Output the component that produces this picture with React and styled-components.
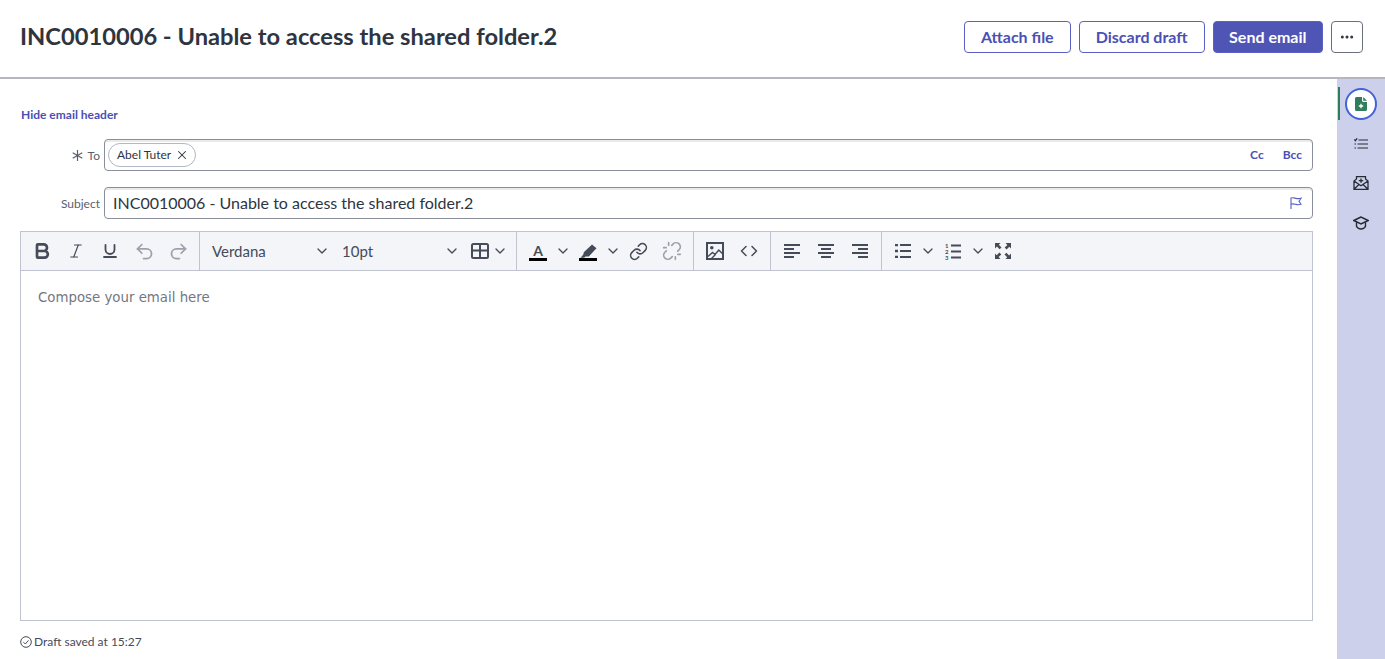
import styled, { createGlobalStyle } from "styled-components";
import {
  Bold,
  ChevronDown,
  Code,
  Italic,
  Link,
  MoreHorizontal,
  Redo2,
  Underline,
  Undo2,
  Unlink,
  X,
} from "lucide-react";

const GlobalStyle = createGlobalStyle`
  html, body { margin: 0; height: 100%; background: #fff; }
  body { font-family: Lato, "Liberation Sans", sans-serif; color: #2e3440; overflow: hidden; }
  * { box-sizing: border-box; }
`;

const Page = styled.div`
  width: 1385px;
  height: 659px;
  display: flex;
  flex-direction: column;
`;
const Header = styled.header`
  height: 79px;
  flex: none;
  display: flex;
  align-items: flex-start;
  justify-content: space-between;
  padding: 21px 22px 0 20px;
  border-bottom: 2px solid #b4b7c0;
`;
const Title = styled.h1`
  margin: 0;
  font-size: 23.7px;
  line-height: 30px;
  font-weight: 700;
  color: #2e3440;
`;
const Actions = styled.div`
  display: flex;
  gap: 8px;
`;
const Button = styled.button`
  height: 32px;
  padding: 0 ${(p) => (p.$primary ? 15.5 : 16)}px 2px;
  border-radius: 4px;
  font: 700 16px Lato, sans-serif;
  border: 1px solid #5a60c4;
  background: ${(p) => (p.$primary ? "#4f55b5" : "#fff")};
  color: ${(p) => (p.$primary ? "#fff" : "#4a50b4")};
`;
const MoreButton = styled.button`
  width: 32px;
  height: 32px;
  padding: 0;
  display: grid;
  place-items: center;
  border-radius: 4px;
  border: 1px solid #6b6f7a;
  background: #fff;
  color: #2e3440;
`;
const Body = styled.div`
  flex: 1;
  display: flex;
  min-height: 0;
`;
const Main = styled.main`
  flex: 1;
  min-width: 0;
  padding: 28px 24px 0 20px;
`;
const HideLink = styled.a`
  display: block;
  height: 16px;
  margin-left: 1px;
  font-size: 12px;
  line-height: 16px;
  font-weight: 700;
  color: #4a50b4;
`;
const FieldRow = styled.div`
  display: flex;
  align-items: center;
  gap: 4px;
  margin-top: ${(p) => p.$top}px;
`;
const FieldLabel = styled.label`
  width: 80px;
  flex: none;
  display: flex;
  justify-content: flex-end;
  align-items: center;
  gap: 5px;
  font-size: 12px;
  color: #5b606c;
`;
const FieldBox = styled.div`
  flex: 1;
  height: 32px;
  display: flex;
  align-items: center;
  padding: 0 10px 0 3px;
  border: 1px solid #8a8e9b;
  border-radius: 4px;
  background: #fff;
  box-shadow: inset 0 2px 0 #e9eaee;
`;
const Chip = styled.span`
  height: 24px;
  display: inline-flex;
  align-items: center;
  gap: 4px;
  padding: 0 6px 1px 8px;
  border: 1px solid #b4b7c4;
  border-radius: 12px;
  font-size: 12px;
  color: #2e3440;
`;
const Spacer = styled.div`
  flex: 1;
`;
const CopyLink = styled.a`
  margin-left: 19px;
  padding-bottom: 2px;
  font-size: 12px;
  font-weight: 700;
  color: #4a50b4;
`;
const SubjectText = styled.span`
  flex: 1;
  padding: 0 0 2px 5px;
  font-size: 16px;
  color: #2e3440;
`;
const Editor = styled.div`
  height: 390px;
  margin-top: 12px;
  border: 1px solid #c0c3d0;
  display: flex;
  flex-direction: column;
`;
const Toolbar = styled.div`
  height: 39px;
  flex: none;
  display: flex;
  background: #f4f5f8;
  border-bottom: 1px solid #c0c3d0;
  color: #454b58;
`;
const ToolGroup = styled.div`
  display: flex;
  align-items: center;
  padding: 0 ${(p) => p.$right || 4}px 0 4px;
  border-right: ${(p) => (p.$last ? "none" : "1px solid #c0c3d0")};
`;
const Tool = styled.span`
  width: ${(p) => p.$w || 34}px;
  height: 34px;
  flex: none;
  display: flex;
  align-items: center;
  justify-content: center;
  color: ${(p) => (p.$muted ? "#9da1ab" : "inherit")};
`;
const Select = styled.span`
  width: ${(p) => p.$w}px;
  flex: none;
  display: flex;
  align-items: center;
  justify-content: space-between;
  padding: 0 ${(p) => p.$right}px 0 ${(p) => p.$left}px;
  font-size: 15px;
  color: #454b58;
`;
const ColorTool = styled.span`
  width: 18px;
  height: 19px;
  display: flex;
  flex-direction: column;
  align-items: center;
  justify-content: flex-end;
  border-bottom: 3px solid #000;
`;
const ColorLetter = styled.span`
  font-size: 14px;
  line-height: 15px;
  font-weight: 700;
  color: #454b58;
`;
const Compose = styled.div`
  flex: 1;
  padding: 18px 17px;
  font-family: "DejaVu Sans", Verdana, sans-serif;
  font-size: 13.33px;
  line-height: 18px;
  color: #73777f;
  background: #fff;
`;
const Status = styled.div`
  display: flex;
  align-items: center;
  gap: 2px;
  margin-top: 13px;
  font-size: 12px;
  line-height: 16px;
  color: #454b58;
`;
const Rail = styled.aside`
  width: 48px;
  flex: none;
  display: flex;
  flex-direction: column;
  align-items: center;
  padding-top: 4px;
  background: #ccd0ea;
  color: #262b36;
`;
const RailItem = styled.div`
  position: relative;
  width: 48px;
  height: 40px;
  display: grid;
  place-items: center;
  &::before {
    content: "";
    display: ${(p) => (p.$active ? "block" : "none")};
    position: absolute;
    left: 1px;
    top: 4px;
    width: 2px;
    height: 33px;
    background: #2f7d5b;
  }
`;
const ActiveCircle = styled.div`
  width: 32px;
  height: 32px;
  margin-top: 1px;
  display: grid;
  place-items: center;
  border-radius: 50%;
  border: 2px solid #4263d8;
  background: #fff;
`;

const AsteriskIcon = () => (
  <svg width="11" height="11" viewBox="0 0 11 11" fill="none" stroke="currentColor" strokeWidth="1.2">
    <path d="M5.5 0v11M0.700 2.700l9.600 5.600M0.700 8.300l9.600-5.600" />
  </svg>
);
const FlagIcon = () => (
  <svg width="12" height="12" viewBox="0 0 12 12" fill="none" stroke="#5a60c4" strokeWidth="1.100">
    <path d="M1 12V1c2-.8 3.500 0 5 .4s3 .4 5-.2L9 4.300l2 3c-2 .6-3.500.5-5 .1s-3-1-5-.2" />
  </svg>
);
const TableIcon = () => (
  <svg width="18" height="16" viewBox="0 0 18 16" fill="none" stroke="currentColor" strokeWidth="2">
    <rect x="1" y="1" width="16" height="14" rx="1.5" />
    <path d="M1 7.500h16M9 1v14" />
  </svg>
);
const PenIcon = () => (
  <svg width="17" height="14" viewBox="0 0 17 14" fill="currentColor">
    <path d="M12 0.500l4.500 3.700-7.700 8.300H5.500l-1.300 1.300H0.500l2.800-3.200.5-2.300z" />
  </svg>
);
const ImageIcon = () => (
  <svg width="18" height="18" viewBox="0 0 18 18" fill="none" stroke="currentColor">
    <rect x="1" y="1" width="16" height="16" strokeWidth="2" />
    <circle cx="5.800" cy="5.800" r="1.800" fill="currentColor" stroke="none" />
    <path d="M2 14.500l4.500-4 2.500 2 3.800-4.500 3.500 3.500M5.500 16.500l4-4" strokeWidth="1.400" />
  </svg>
);
const AlignIcon = ({ side }) => {
  const short = { left: 0, center: 3, right: 6 }[side];
  return (
    <svg width="16" height="14" viewBox="0 0 16 14" fill="currentColor">
      <rect x="0" y="0" width="16" height="2" />
      <rect x={short} y="4" width="10" height="2" />
      <rect x="0" y="8" width="16" height="2" />
      <rect x={short} y="12" width="10" height="2" />
    </svg>
  );
};
const BulletIcon = () => (
  <svg width="16" height="14" viewBox="0 0 16 14" fill="none" stroke="currentColor" strokeWidth="2">
    <path d="M5 1h11M5 7h11M5 13h11" />
    <path d="M0 1h3M0 7h3M0 13h3" strokeWidth="2.600" />
  </svg>
);
const NumberedIcon = () => (
  <svg width="16" height="17" viewBox="0 0 16 17" fill="none" stroke="currentColor" strokeWidth="2">
    <path d="M6 2.500h10M6 8.500h10M6 14.500h10" />
    <text x="0" y="5" fontSize="6" fontWeight="700" fill="currentColor" stroke="none">1</text>
    <text x="0" y="11" fontSize="6" fontWeight="700" fill="currentColor" stroke="none">2</text>
    <text x="0" y="17" fontSize="6" fontWeight="700" fill="currentColor" stroke="none">3</text>
  </svg>
);
const FullscreenIcon = () => (
  <svg width="16" height="16" viewBox="0 0 16 16" fill="currentColor">
    <path d="M0 0h5.500L3.800 1.700l2.700 2.700-1.900 1.900-2.700-2.700L0 5.500z" />
    <path d="M16 0v5.500l-1.700-1.700-2.700 2.700-1.900-1.900 2.700-2.700L10.500 0z" />
    <path d="M0 16v-5.500l1.700 1.700 2.700-2.700 1.900 1.900-2.700 2.700L5.500 16z" />
    <path d="M16 16h-5.500l1.700-1.700-2.700-2.700 1.900-1.900 2.700 2.700 1.900-1.800z" />
  </svg>
);
const NewDocIcon = () => (
  <svg width="12" height="14" viewBox="0 0 12 14">
    <path d="M1.500 0H7v3.500A1.500 1.500 0 0 0 8.500 5H12v7.500a1.500 1.500 0 0 1-1.500 1.500h-9A1.500 1.500 0 0 1 0 12.500v-11A1.500 1.500 0 0 1 1.500 0z" fill="#2f7d5b" />
    <path d="M8.200 0L12 3.800H8.200z" fill="#2f7d5b" />
    <path d="M6 6.800v4.400M3.800 9h4.400" stroke="#fff" strokeWidth="1.300" />
  </svg>
);
const ChecklistIcon = () => (
  <svg width="14" height="11" viewBox="0 0 14 11" fill="none" stroke="currentColor" strokeWidth="1.200">
    <path d="M4.500 2h9.500M3.500 6h10.500M3.500 10h10.500" />
    <path d="M0.300 1.500l1 1.200L3.200 0.300M0.500 6h1.500M0.500 10h1.500" />
  </svg>
);
const MailIcon = () => (
  <svg width="16" height="14" viewBox="0 0 16 14" fill="none" stroke="currentColor" strokeWidth="1.300">
    <path d="M1 5v8.300h14V5l-2.500-2V0.700h-9V3zM1 5l7 4.800L15 5M1 13.300l5-4.800M15 13.300l-5-4.800" />
    <path d="M8 2.500v4.300M5.800 4.600h4.400" />
  </svg>
);
const CapIcon = () => (
  <svg width="16" height="14" viewBox="0 0 16 14" fill="none" stroke="currentColor" strokeWidth="1.400">
    <path d="M8 1L0.800 4.500 8 8l7.200-3.500z" />
    <path d="M3.500 6.300v4c1 1.700 2.800 2.700 4.500 2.700s3.500-1 4.500-2.700v-4" />
  </svg>
);
const SavedIcon = () => (
  <svg width="12" height="12" viewBox="0 0 12 12" fill="none" stroke="currentColor" strokeWidth="1">
    <circle cx="6" cy="6" r="5.300" />
    <path d="M3.500 6.200l1.800 1.800 3.200-3.600" />
  </svg>
);

const Chev = () => (
  <Tool $w={16}>
    <ChevronDown size={16} strokeWidth={2} />
  </Tool>
);

export default function App() {
  return (
    <Page>
      <GlobalStyle />
      <Header>
        <Title>INC0010006 - Unable to access the shared folder.2</Title>
        <Actions>
          <Button>Attach file</Button>
          <Button>Discard draft</Button>
          <Button $primary>Send email</Button>
          <MoreButton>
            <MoreHorizontal size={16} strokeWidth={2.5} />
          </MoreButton>
        </Actions>
      </Header>
      <Body>
        <Main>
          <HideLink>Hide email header</HideLink>
          <FieldRow $top={16}>
            <FieldLabel>
              <AsteriskIcon />
              To
            </FieldLabel>
            <FieldBox>
              <Chip>
                Abel Tuter
                <X size={14} strokeWidth={1.8} />
              </Chip>
              <Spacer />
              <CopyLink>Cc</CopyLink>
              <CopyLink>Bcc</CopyLink>
            </FieldBox>
          </FieldRow>
          <FieldRow $top={16}>
            <FieldLabel>Subject</FieldLabel>
            <FieldBox>
              <SubjectText>INC0010006 - Unable to access the shared folder.2</SubjectText>
              <FlagIcon />
            </FieldBox>
          </FieldRow>
          <Editor>
            <Toolbar>
              <ToolGroup>
                <Tool><Bold size={20} strokeWidth={3.2} /></Tool>
                <Tool><Italic size={18} strokeWidth={1.6} /></Tool>
                <Tool><Underline size={18} strokeWidth={2.4} /></Tool>
                <Tool $muted><Undo2 size={21} strokeWidth={2} /></Tool>
                <Tool $muted><Redo2 size={21} strokeWidth={2} /></Tool>
              </ToolGroup>
              <Select $w={134} $left={12} $right={4}>
                Verdana
                <ChevronDown size={16} strokeWidth={2} />
              </Select>
              <Select $w={129} $left={8} $right={3}>
                10pt
                <ChevronDown size={16} strokeWidth={2} />
              </Select>
              <ToolGroup $right={8}>
                <Tool $w={25}><TableIcon /></Tool>
                <Chev />
              </ToolGroup>
              <ToolGroup>
                <Tool><ColorTool><ColorLetter>A</ColorLetter></ColorTool></Tool>
                <Chev />
                <Tool><ColorTool><PenIcon /></ColorTool></Tool>
                <Chev />
                <Tool><Link size={19} strokeWidth={2} /></Tool>
                <Tool $muted><Unlink size={20} strokeWidth={2} /></Tool>
              </ToolGroup>
              <ToolGroup>
                <Tool><ImageIcon /></Tool>
                <Tool><Code size={18} strokeWidth={2} /></Tool>
              </ToolGroup>
              <ToolGroup>
                <Tool><AlignIcon side="left" /></Tool>
                <Tool><AlignIcon side="center" /></Tool>
                <Tool><AlignIcon side="right" /></Tool>
              </ToolGroup>
              <ToolGroup $last>
                <Tool><BulletIcon /></Tool>
                <Chev />
                <Tool><NumberedIcon /></Tool>
                <Chev />
                <Tool><FullscreenIcon /></Tool>
              </ToolGroup>
            </Toolbar>
            <Compose>Compose your email here</Compose>
          </Editor>
          <Status>
            <SavedIcon />
            Draft saved at 15:27
          </Status>
        </Main>
        <Rail>
          <RailItem $active>
            <ActiveCircle><NewDocIcon /></ActiveCircle>
          </RailItem>
          <RailItem><ChecklistIcon /></RailItem>
          <RailItem><MailIcon /></RailItem>
          <RailItem><CapIcon /></RailItem>
        </Rail>
      </Body>
    </Page>
  );
}
